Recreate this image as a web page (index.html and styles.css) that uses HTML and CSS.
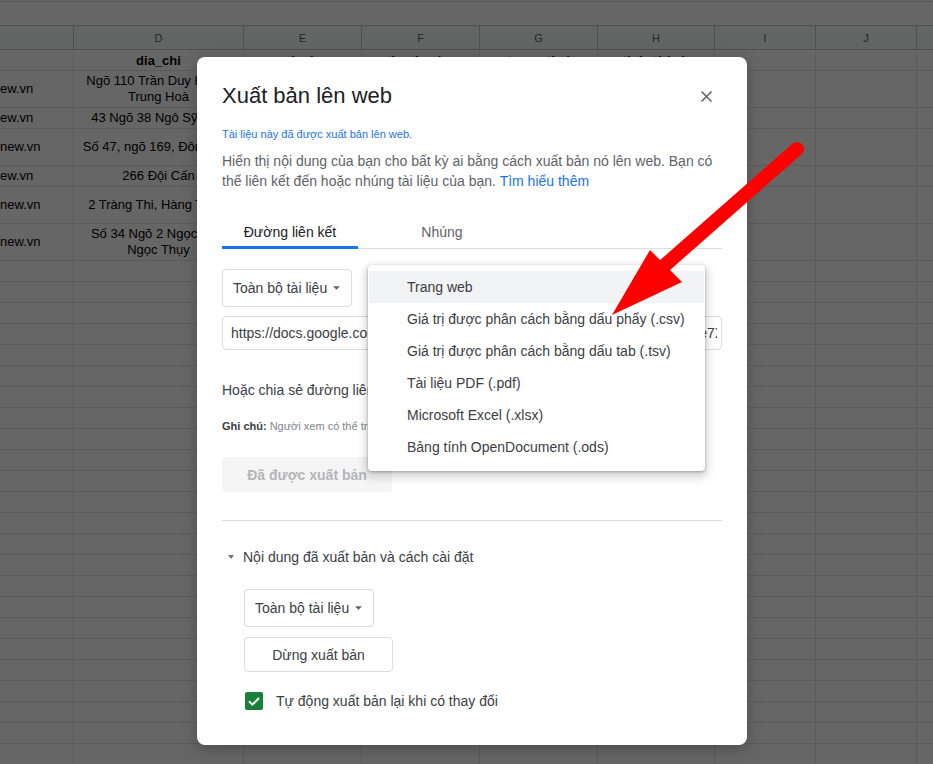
FILE: index.html
```html
<!DOCTYPE html>
<html lang="vi">
<head>
<meta charset="utf-8">
<title>Xuất bản lên web</title>
<link rel="stylesheet" href="styles.css">
</head>
<body>
<div class="sheet">
  <div class="topbar"></div>
  <div class="row colhead">
    <div class="c"></div><div class="c">D</div><div class="c">E</div><div class="c">F</div><div class="c">G</div><div class="c">H</div><div class="c">I</div><div class="c">J</div><div class="c last"></div>
  </div>
  <div class="row h21 hdr">
    <div class="c"></div><div class="c">dia_chi</div><div class="c">loai</div><div class="c">thanh_pho</div><div class="c">trang_thai</div><div class="c">tinh_thành</div><div class="c"></div><div class="c"></div><div class="c last"></div>
  </div>
  <div class="row h37">
    <div class="c l">ew.vn</div><div class="c">Ngõ 110 Trần Duy Hưng,<br>Trung Hoà</div><div class="c"></div><div class="c"></div><div class="c"></div><div class="c"></div><div class="c"></div><div class="c"></div><div class="c last"></div>
  </div>
  <div class="row h21">
    <div class="c l">ew.vn</div><div class="c">43 Ngõ 38 Ngô Sỹ Liên</div><div class="c"></div><div class="c"></div><div class="c"></div><div class="c"></div><div class="c"></div><div class="c"></div><div class="c last"></div>
  </div>
  <div class="row h37">
    <div class="c l">new.vn</div><div class="c">Số 47, ngõ 169, Đông Tác</div><div class="c"></div><div class="c"></div><div class="c"></div><div class="c"></div><div class="c"></div><div class="c"></div><div class="c last"></div>
  </div>
  <div class="row h21">
    <div class="c l">ew.vn</div><div class="c">266 Đội Cấn</div><div class="c"></div><div class="c"></div><div class="c"></div><div class="c"></div><div class="c"></div><div class="c"></div><div class="c last"></div>
  </div>
  <div class="row h37">
    <div class="c l">new.vn</div><div class="c">2 Tràng Thi, Hàng Trống</div><div class="c"></div><div class="c"></div><div class="c"></div><div class="c"></div><div class="c"></div><div class="c"></div><div class="c last"></div>
  </div>
  <div class="row h37">
    <div class="c l">new.vn</div><div class="c">Số 34 Ngõ 2 Ngọc Lâm<br>Ngọc Thụy</div><div class="c"></div><div class="c"></div><div class="c"></div><div class="c"></div><div class="c"></div><div class="c"></div><div class="c last"></div>
  </div>
  <div class="filler"></div>
</div>

<div class="scrim"></div>

<div class="dialog">
  <div class="dlg-head">
    <h1 class="title">Xuất bản lên web</h1>
    <svg class="close" viewBox="0 0 24 24"><path d="M19 6.41L17.59 5 12 10.59 6.41 5 5 6.41 10.59 12 5 17.59 6.41 19 12 13.41 17.59 19 19 17.59 13.41 12z"/></svg>
  </div>
  <p class="notice">Tài liệu này đã được xuất bản lên web.</p>
  <p class="desc">Hiển thị nội dung của bạn cho bất kỳ ai bằng cách xuất bản nó lên web. Bạn có thể liên kết đến hoặc nhúng tài liệu của bạn. <a href="#">Tìm hiểu thêm</a></p>
  <div class="tabs">
    <div class="tab tab-link active">Đường liên kết</div>
    <div class="tab tab-embed">Nhúng</div>
  </div>
  <div class="select">Toàn bộ tài liệu<svg class="caret" viewBox="0 0 8 4"><path d="M0 0h8L4 4z"/></svg></div>
  <div class="urlbox"><span class="url">https://docs.google.com/spreadsheets/d/e/2PACX-1vThq8bu3dn5ao2gp6ude7Xk2PfR9sLwQ4mZ/pubhtml</span></div>
  <p class="share">Hoặc chia sẻ đường liên kết qua:</p>
  <p class="note"><b>Ghi chú:</b> Người xem có thể truy cập vào tài liệu nguồn</p>
  <div class="btn disabled">Đã được xuất bản</div>
  <div class="divider"></div>
  <div class="section"><span class="tri"></span>Nội dung đã xuất bản và cách cài đặt</div>
  <div class="settings">
    <div class="select">Toàn bộ tài liệu<svg class="caret" viewBox="0 0 8 4"><path d="M0 0h8L4 4z"/></svg></div>
    <div class="btn outline">Dừng xuất bản</div>
    <div class="check">
      <svg class="box" viewBox="0 0 18 18"><rect width="18" height="18" rx="2" fill="#188038"/><polyline points="4,9.3 7.4,12.7 14,6" fill="none" stroke="#fff" stroke-width="2"/></svg>
      <span>Tự động xuất bản lại khi có thay đổi</span>
    </div>
  </div>

  <div class="menu">
    <div class="item hover">Trang web</div>
    <div class="item">Giá trị được phân cách bằng dấu phẩy (.csv)</div>
    <div class="item">Giá trị được phân cách bằng dấu tab (.tsv)</div>
    <div class="item">Tài liệu PDF (.pdf)</div>
    <div class="item">Microsoft Excel (.xlsx)</div>
    <div class="item">Bảng tính OpenDocument (.ods)</div>
  </div>
</div>

<svg class="arrow" viewBox="0 0 933 764">
  <line x1="797" y1="149" x2="664" y2="266" stroke="#ff0000" stroke-width="14" stroke-linecap="round"/>
  <polygon points="650,250 682,282 612,315" fill="#ff0000"/>
</svg>
</body>
</html>
```

FILE: styles.css
```css
* { box-sizing: border-box; }

html, body {
  margin: 0;
  padding: 0;
}

body {
  width: 933px;
  height: 764px;
  overflow: hidden;
  position: relative;
  background: #fff;
  font-family: "Liberation Sans", Arial, sans-serif;
}

/* ---------- spreadsheet ---------- */
.sheet {
  font-family: "Liberation Sans", Arial, sans-serif;
  font-size: 13px;
  color: #000;
}

.topbar {
  margin-top: 1px;
  height: 25px;
  border-top: 1px solid #d4d4d4;
  border-bottom: 1px solid #c8c8c8;
  background: #fff;
}

.row {
  display: grid;
  grid-template-columns: 74px 170px 118px 118px 118px 117px 101px 101px 1fr;
  border-bottom: 1px solid #e2e3e3;
}

.c {
  border-right: 1px solid #e2e3e3;
  display: flex;
  align-items: center;
  justify-content: center;
  text-align: center;
  overflow: hidden;
  white-space: nowrap;
  line-height: 16px;
}

.c.l { justify-content: flex-start; }
.c.last { border-right: 0; }

.colhead {
  height: 24px;
  background: #f8f9fa;
  border-bottom-color: #c8c8c8;
  font-size: 11px;
  color: #5f6368;
}
.colhead .c { border-right-color: #c8c8c8; }

.h21 { height: 21px; }
.h37 { height: 37px; }

.hdr {
  font-weight: bold;
  padding-top: 2px;
}

.filler {
  height: 520px;
  background-image:
    linear-gradient(to right,
      transparent 73px, #e2e3e3 73px 74px,
      transparent 74px 243px, #e2e3e3 243px 244px,
      transparent 244px 361px, #e2e3e3 361px 362px,
      transparent 362px 479px, #e2e3e3 479px 480px,
      transparent 480px 597px, #e2e3e3 597px 598px,
      transparent 598px 714px, #e2e3e3 714px 715px,
      transparent 715px 815px, #e2e3e3 815px 816px,
      transparent 816px 916px, #e2e3e3 916px 917px,
      transparent 917px),
    repeating-linear-gradient(to bottom, transparent 0 20px, #e2e3e3 20px 21px);
}

.scrim {
  position: absolute;
  inset: 0;
  background: rgba(0, 0, 0, 0.6);
}

/* ---------- dialog ---------- */
.dialog {
  position: absolute;
  left: 197px;
  top: 57px;
  width: 550px;
  height: 688px;
  background: #fff;
  border-radius: 8px;
  padding: 25px 25px 0;
  box-shadow: 0 4px 16px rgba(0, 0, 0, 0.25);
  color: #3c4043;
  font-size: 14px;
}

.dialog p { margin: 0; }

.dlg-head {
  display: flex;
  align-items: center;
  justify-content: space-between;
  height: 28px;
}

.title {
  margin: 0;
  font-size: 22px;
  line-height: 28px;
  font-weight: normal;
  color: #202124;
}

.close {
  width: 19px;
  height: 19px;
  margin-right: 6px;
  fill: #5f6368;
}

.notice {
  margin-top: 16px !important;
  font-size: 11px;
  line-height: 16px;
  color: #1a73e8;
}

.desc {
  margin-top: 9px !important;
  line-height: 20px;
  color: #5f6368;
}

.desc a {
  color: #1a73e8;
  text-decoration: none;
}

.tabs {
  display: flex;
  margin-top: 9px;
  border-bottom: 1px solid #dadce0;
}

.tab {
  padding: 22px 0 4px;
  line-height: 20px;
  border-bottom: 3px solid transparent;
  margin-bottom: -1px;
  text-align: center;
  color: #5f6368;
}

.tab-link { width: 136px; }
.tab-embed { width: 168px; }

.tab.active {
  color: #202124;
  border-bottom-color: #1a73e8;
}

.select {
  margin-top: 20px;
  width: fit-content;
  height: 38px;
  display: flex;
  align-items: center;
  gap: 6px;
  padding: 0 11px 0 10px;
  border: 1px solid #dadce0;
  border-radius: 4px;
  font-size: 14px;
  color: #3c4043;
}

.caret {
  width: 7px;
  height: 4px;
  fill: #5f6368;
}

.urlbox {
  margin-top: 9px;
  height: 34px;
  display: flex;
  align-items: center;
  padding: 0 4px 0 8px;
  border: 1px solid #dadce0;
  border-radius: 4px;
  color: #3c4043;
}

.url {
  display: block;
  flex: 1;
  overflow: hidden;
  white-space: nowrap;
}

.share {
  margin-top: 30px !important;
  line-height: 20px;
  color: #3c4043;
}

.note {
  margin-top: 18px !important;
  font-size: 11px;
  line-height: 16px;
  color: #80868b;
}

.note b {
  color: #3c4043;
}

.btn {
  height: 35px;
  display: flex;
  align-items: center;
  justify-content: center;
  border-radius: 4px;
}

.btn.disabled {
  margin-top: 23px;
  width: 170px;
  background: #f5f5f5;
  color: #b4b6b9;
  font-weight: bold;
}

.divider {
  margin-top: 28px;
  border-top: 1px solid #dadce0;
}

.section {
  margin-top: 26px;
  display: flex;
  align-items: center;
  line-height: 20px;
  color: #3c4043;
}

.tri {
  width: 0;
  height: 0;
  margin: 0 9px 0 6px;
  border-left: 3px solid transparent;
  border-right: 3px solid transparent;
  border-top: 4px solid #70757a;
}

.settings {
  padding-left: 22px;
}

.settings .select { margin-top: 22px; }

.btn.outline {
  margin-top: 10px;
  width: 149px;
  border: 1px solid #dadce0;
  color: #3c4043;
}

.check {
  margin-top: 19px;
  display: flex;
  align-items: center;
  line-height: 20px;
  color: #3c4043;
}

.box {
  width: 18px;
  height: 18px;
  margin: 0 13px 0 1px;
}

/* ---------- popup menu ---------- */
.menu {
  position: absolute;
  left: 171px;
  top: 208px;
  width: 337px;
  padding: 6px 0 8px;
  background: #fff;
  border-radius: 4px;
  box-shadow: 0 1px 3px rgba(0, 0, 0, 0.3), 0 4px 8px 3px rgba(0, 0, 0, 0.15);
}

.item {
  height: 32px;
  line-height: 32px;
  padding-left: 38px;
  margin: 0 1px;
  color: #3c4043;
  white-space: nowrap;
}

.item.hover {
  background: #f1f3f4;
}

/* ---------- annotation arrow ---------- */
.arrow {
  position: absolute;
  left: 0;
  top: 0;
  width: 933px;
  height: 764px;
  pointer-events: none;
}
```
